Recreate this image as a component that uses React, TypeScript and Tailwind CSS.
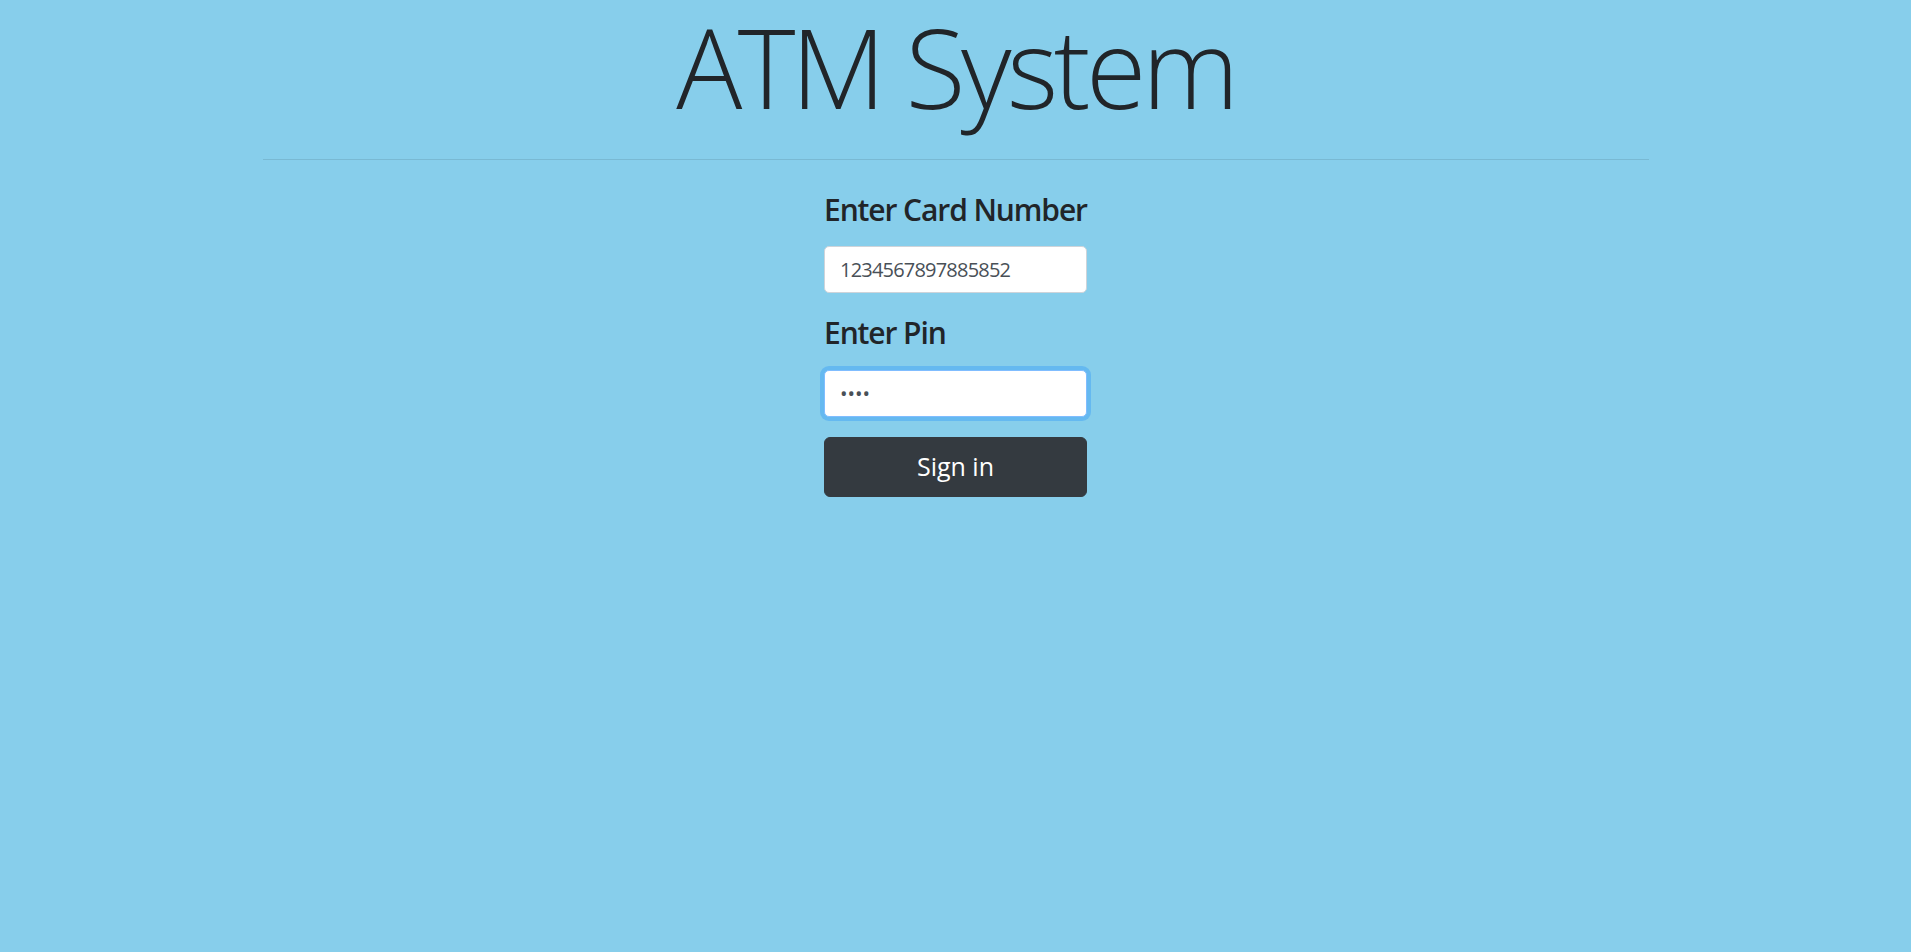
import React from "react";

export default function App() {
  return (
    <div
      className="min-h-screen w-full bg-[#87ceeb] text-[#212529]"
      style={{ fontFamily: '"Open Sans", "Noto Sans", sans-serif' }}
    >
      <h1 className="m-0 text-center text-[110px] font-light leading-[132px] tracking-[-4.5px]">
        ATM System
      </h1>
      <div className="mx-auto mt-[27px] w-[1386px] border-t border-[rgba(0,0,0,0.1)]" />
      <form
        className="mx-auto mt-[32px] flex w-[263px] flex-col"
        onSubmit={(e) => e.preventDefault()}
      >
        <h4 className="m-0 whitespace-nowrap text-[30px] font-semibold leading-[36px] tracking-[-1.1px]">
          Enter Card Number
        </h4>
        <input
          type="text"
          readOnly
          value="1234567897885852"
          className="mt-[18px] h-[47px] w-full rounded-[5px] border border-[#ced4da] bg-white px-[15px] text-[20px] tracking-[-0.8px] text-[#495057] outline-none"
        />
        <h4 className="m-0 mt-[22px] whitespace-nowrap text-[30px] font-semibold leading-[36px] tracking-[-1.1px]">
          Enter Pin
        </h4>
        <input
          type="password"
          readOnly
          value="1234"
          className="mt-[19px] h-[47px] w-full rounded-[5px] border border-[#80bdff] bg-white px-[15px] text-[20px] text-[#495057] shadow-[0_0_0_4px_rgba(0,123,255,0.25)] outline-none"
        />
        <button
          type="submit"
          className="mt-[20px] h-[60px] w-full rounded-[6px] border border-[#343a40] bg-[#343a40] text-[25px] text-white"
        >
          Sign in
        </button>
      </form>
    </div>
  );
}
